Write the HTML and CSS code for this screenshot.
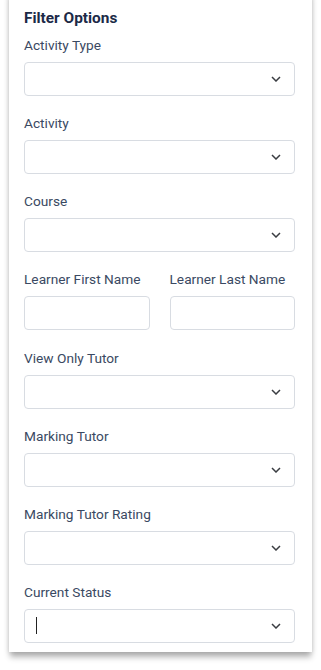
FILE: index.html
```html
<!doctype html>
<html><head>
  <meta charset="utf-8">
  <title>Filter Options</title>
  <link rel="stylesheet" href="styles.css">
</head><body>
  <div class="card">
    <h2 class="title">Filter Options</h2>

    <div class="field">
      <label>Activity Type</label>
      <div class="select"><svg class="chev" viewBox="0 0 10 6"><path d="M1 1l4 4 4-4"/></svg></div>
    </div>

    <div class="field">
      <label>Activity</label>
      <div class="select"><svg class="chev" viewBox="0 0 10 6"><path d="M1 1l4 4 4-4"/></svg></div>
    </div>

    <div class="field">
      <label>Course</label>
      <div class="select"><svg class="chev" viewBox="0 0 10 6"><path d="M1 1l4 4 4-4"/></svg></div>
    </div>

    <div class="row">
      <div class="field">
        <label>Learner First Name</label>
        <div class="input"></div>
      </div>
      <div class="field">
        <label>Learner Last Name</label>
        <div class="input"></div>
      </div>
    </div>

    <div class="field">
      <label>View Only Tutor</label>
      <div class="select"><svg class="chev" viewBox="0 0 10 6"><path d="M1 1l4 4 4-4"/></svg></div>
    </div>

    <div class="field">
      <label>Marking Tutor</label>
      <div class="select"><svg class="chev" viewBox="0 0 10 6"><path d="M1 1l4 4 4-4"/></svg></div>
    </div>

    <div class="field">
      <label>Marking Tutor Rating</label>
      <div class="select"><svg class="chev" viewBox="0 0 10 6"><path d="M1 1l4 4 4-4"/></svg></div>
    </div>

    <div class="field last">
      <label>Current Status</label>
      <div class="select"><span class="caret"></span><svg class="chev" viewBox="0 0 10 6"><path d="M1 1l4 4 4-4"/></svg></div>
    </div>
  </div>
</body></html>
```

FILE: styles.css
```css
body {
	margin: 0;
	padding-bottom: 18px;
	background: #fff;
	font: 13.7px/20px Roboto, 'Liberation Sans', sans-serif;
}

.card {
	margin: -10px 9px 0 9px;
	padding: 10px 17px 9px 15px;
	background: #fff;
	box-shadow: 0 6px 6px -1px rgba(0, 0, 0, 0.3), 0 0 5px rgba(0, 0, 0, 0.12);
}

.title {
	margin: 8px 0 7px 0;
	font-size: 15.4px;
	line-height: 20px;
	font-weight: bold;
	color: #1c2a47;
}

.field {
	display: flex;
	flex-direction: column;
	margin-bottom: 17.15px;
	min-width: 0;
}

.field.last {
	margin-bottom: 0;
}

label {
	color: #3a4962;
	line-height: 20px;
	margin-bottom: 7px;
	white-space: nowrap;
}

.select, .input {
	height: 34px;
	box-sizing: border-box;
	border: 1px solid #d8dce2;
	border-radius: 4px;
	background: #fff;
	display: flex;
	align-items: center;
}

.select {
	justify-content: flex-end;
	padding-right: 13px;
}

.chev {
	width: 10px;
	height: 6px;
	fill: none;
	stroke: #3a3d42;
	stroke-width: 1.5;
}

.caret {
	width: 1px;
	height: 17px;
	background: #222;
	margin-left: 11px;
	margin-right: auto;
}

.row {
	display: grid;
	grid-template-columns: 1fr 1fr;
	gap: 20px;
}
```
